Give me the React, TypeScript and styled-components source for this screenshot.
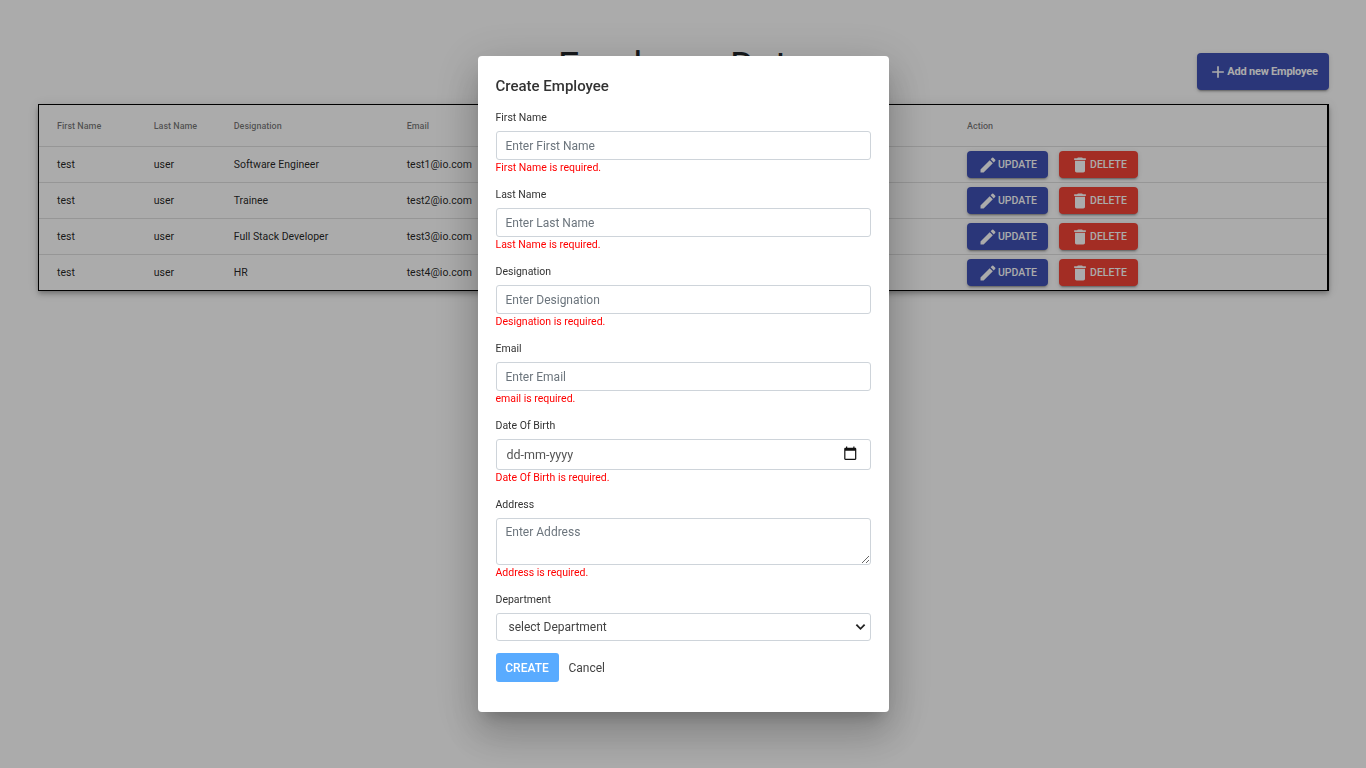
import React from "react";
import styled, { createGlobalStyle } from "styled-components";

const employees = [
  { id: 1, designation: "Software Engineer", email: "test1@io.com" },
  { id: 2, designation: "Trainee", email: "test2@io.com" },
  { id: 3, designation: "Full Stack Developer", email: "test3@io.com" },
  { id: 4, designation: "HR", email: "test4@io.com" },
];

const GlobalStyle = createGlobalStyle`
  html, body {
    margin: 0;
    padding: 0;
    background: #fff;
    font-family: Roboto, "Liberation Sans", sans-serif;
  }
  * { box-sizing: border-box; }
`;

const Page = styled.div`
  min-height: 768px;
  padding: 0 37px 0 38px;
`;

const Header = styled.header`
  height: 104px;
  display: flex;
  justify-content: space-between;
  align-items: flex-start;
`;

const Title = styled.h1`
  margin: 41px 0 0 520px;
  font-size: 37.5px;
  line-height: 48px;
  font-weight: 400;
  color: #212529;
  white-space: nowrap;
`;

const ActionButton = styled.button<{ $color: string }>`
  display: inline-flex;
  align-items: center;
  justify-content: center;
  border: none;
  border-radius: 4px;
  padding: 0;
  background: ${({ $color }) => $color};
  color: #fff;
  font-family: inherit;
  font-weight: 500;
  font-size: 10.5px;
  box-shadow: 0 3px 1px -2px rgba(0, 0, 0, 0.2), 0 2px 2px 0 rgba(0, 0, 0, 0.14),
    0 1px 5px 0 rgba(0, 0, 0, 0.12);
`;

const AddButton = styled(ActionButton)`
  width: 132px;
  height: 37px;
  margin-top: 53px;
  font-size: 11px;
  font-weight: 700;
  letter-spacing: -0.2px;
  svg {
    margin-right: -1px;
  }
`;

const Table = styled.table`
  width: 100%;
  table-layout: fixed;
  border-collapse: separate;
  border-spacing: 0;
  border: 1px solid #000;
  border-right-width: 2px;
  box-shadow: 0 2px 4px -1px rgba(0, 0, 0, 0.2), 0 4px 5px 0 rgba(0, 0, 0, 0.14),
    0 1px 10px 0 rgba(0, 0, 0, 0.12);
`;

const HeadCell = styled.th<{ $width?: number }>`
  ${({ $width }) => ($width ? `width: ${$width}px;` : "")}
  height: 42px;
  padding: 1px 0 0 18px;
  border-bottom: 1px solid #e0e0e0;
  text-align: left;
  font-size: 9px;
  font-weight: 500;
  color: rgba(0, 0, 0, 0.54);
`;

const Cell = styled.td`
  height: 36px;
  padding: 0 0 0 18px;
  border-bottom: 1px solid #e0e0e0;
  font-size: 10.5px;
  color: rgba(0, 0, 0, 0.87);
  white-space: nowrap;
  tr:last-child > & {
    height: 35px;
    border-bottom: none;
  }
`;

const ActionGroup = styled.div`
  display: flex;
  gap: 11px;
`;

const RowButton = styled(ActionButton)<{ $wide?: boolean }>`
  width: ${({ $wide }) => ($wide ? 81 : 79)}px;
  height: 27px;
`;

const Backdrop = styled.div`
  position: fixed;
  inset: 0;
  display: flex;
  align-items: center;
  justify-content: center;
  background: rgba(0, 0, 0, 0.33);
`;

const Modal = styled.form`
  width: 411px;
  padding: 18px 18px 30px;
  background: #fff;
  border-radius: 4px;
  box-shadow: 0 11px 15px -7px rgba(0, 0, 0, 0.2), 0 24px 38px 3px rgba(0, 0, 0, 0.14),
    0 9px 46px 8px rgba(0, 0, 0, 0.12);
`;

const ModalTitle = styled.h2`
  margin: 0 0 10px;
  font-size: 15px;
  line-height: 24px;
  font-weight: 500;
  color: #333;
`;

const Field = styled.div`
  margin-bottom: 11px;
`;

const Label = styled.label`
  display: block;
  height: 18px;
  margin-bottom: 5px;
  font-size: 10.5px;
  line-height: 20px;
  color: #333;
`;

const controlStyles = `
  display: block;
  width: 100%;
  border: 1px solid #ced4da;
  border-radius: 3px;
  background: #fff;
  font-family: inherit;
  font-size: 12px;
  outline: none;
`;

const Input = styled.input`
  ${controlStyles}
  height: 29px;
  padding: 0 9px;
  &::placeholder {
    color: #6c757d;
    opacity: 1;
  }
`;

const TextArea = styled.textarea`
  ${controlStyles}
  height: 47px;
  padding: 6px 9px;
  resize: vertical;
  &::placeholder {
    color: #6c757d;
    opacity: 1;
  }
`;

const DateBox = styled.div`
  ${controlStyles}
  height: 31px;
  padding: 0 12px 0 10px;
  display: flex;
  align-items: center;
  justify-content: space-between;
  font-size: 12.5px;
  color: #555;
  svg {
    margin-bottom: 2px;
  }
`;

const SelectBox = styled.div`
  position: relative;
  margin-bottom: 12px;
  svg {
    position: absolute;
    right: 5px;
    top: 8px;
    pointer-events: none;
  }
`;

const Select = styled.select`
  ${controlStyles}
  height: 28px;
  padding: 0 0 0 12px;
  appearance: none;
  color: #444;
`;

const ErrorText = styled.div`
  height: 14px;
  font-size: 10.5px;
  line-height: 16px;
  color: #ff0000;
`;

const Footer = styled.div`
  display: flex;
  align-items: center;
  gap: 10px;
`;

const CreateButton = styled.button`
  width: 63px;
  height: 29px;
  border: none;
  border-radius: 3px;
  padding: 0;
  background: #59abff;
  color: #fff;
  font-family: inherit;
  font-size: 12px;
  font-weight: 500;
`;

const CancelLink = styled.span`
  font-size: 12px;
  color: #444;
`;

const AddIcon = () => (
  <svg width="20" height="20" viewBox="0 0 24 24" fill="currentColor">
    <path d="M19 13h-6v6h-2v-6H5v-2h6V5h2v6h6v2z" />
  </svg>
);

const EditIcon = () => (
  <svg width="20" height="20" viewBox="0 0 24 24" fill="currentColor">
    <path d="M3 17.25V21h3.75L17.81 9.94l-3.75-3.75L3 17.25zM20.71 7.04c.39-.39.39-1.02 0-1.41l-2.34-2.34a.9959.9959 0 0 0-1.41 0l-1.83 1.83 3.75 3.75 1.83-1.83z" />
  </svg>
);

const DeleteIcon = () => (
  <svg width="20" height="20" viewBox="0 0 24 24" fill="currentColor">
    <path d="M6 19c0 1.1.9 2 2 2h8c1.1 0 2-.9 2-2V7H6v12zM19 4h-3.5l-1-1h-5l-1 1H5v2h14V4z" />
  </svg>
);

const CalendarIcon = () => (
  <svg width="14.5" height="14.5" viewBox="0 0 24 24" fill="#111">
    <path d="M20 3h-1V1h-2v2H7V1H5v2H4c-1.1 0-2 .9-2 2v16c0 1.1.9 2 2 2h16c1.1 0 2-.9 2-2V5c0-1.1-.9-2-2-2zm0 18H4V8h16v13z" />
  </svg>
);

const ChevronIcon = () => (
  <svg width="11" height="11" viewBox="0 0 12 12" fill="none" stroke="#222" strokeWidth="2">
    <path d="M1.5 4l4.5 4.5L10.5 4" />
  </svg>
);

// Campos de texto simples do formulário
const textFields = [
  { label: "First Name", error: "First Name is required." },
  { label: "Last Name", error: "Last Name is required." },
  { label: "Designation", error: "Designation is required." },
  { label: "Email", error: "email is required." },
];

const App: React.FC = () => {
  return (
    <>
      <GlobalStyle />
      <Page>
        <Header>
          <Title>Employee Data</Title>
          <AddButton $color="#3f51b5" type="button">
            <AddIcon />
            Add new Employee
          </AddButton>
        </Header>

        <Table>
          <thead>
            <tr>
              <HeadCell $width={96.7}>First Name</HeadCell>
              <HeadCell $width={80}>Last Name</HeadCell>
              <HeadCell $width={173}>Designation</HeadCell>
              <HeadCell $width={150}>Email</HeadCell>
              <HeadCell $width={410.3} />
              <HeadCell>Action</HeadCell>
            </tr>
          </thead>
          <tbody>
            {employees.map((employee) => (
              <tr key={employee.id}>
                <Cell>test</Cell>
                <Cell>user</Cell>
                <Cell>{employee.designation}</Cell>
                <Cell>{employee.email}</Cell>
                <Cell />
                <Cell>
                  <ActionGroup>
                    <RowButton $color="#3f51b5" $wide type="button">
                      <EditIcon />
                      UPDATE
                    </RowButton>
                    <RowButton $color="#f44336" type="button">
                      <DeleteIcon />
                      DELETE
                    </RowButton>
                  </ActionGroup>
                </Cell>
              </tr>
            ))}
          </tbody>
        </Table>
      </Page>

      <Backdrop>
        <Modal>
          <ModalTitle>Create Employee</ModalTitle>

          {textFields.map((field) => (
            <Field key={field.label}>
              <Label>{field.label}</Label>
              <Input placeholder={`Enter ${field.label}`} />
              <ErrorText>{field.error}</ErrorText>
            </Field>
          ))}

          <Field>
            <Label>Date Of Birth</Label>
            <DateBox>
              dd-mm-yyyy
              <CalendarIcon />
            </DateBox>
            <ErrorText>Date Of Birth is required.</ErrorText>
          </Field>

          <Field>
            <Label>Address</Label>
            <TextArea placeholder="Enter Address" />
            <ErrorText>Address is required.</ErrorText>
          </Field>

          <Label>Department</Label>
          <SelectBox>
            <Select>
              <option>select Department</option>
            </Select>
            <ChevronIcon />
          </SelectBox>

          <Footer>
            <CreateButton type="button">CREATE</CreateButton>
            <CancelLink>Cancel</CancelLink>
          </Footer>
        </Modal>
      </Backdrop>
    </>
  );
};

export default App;
